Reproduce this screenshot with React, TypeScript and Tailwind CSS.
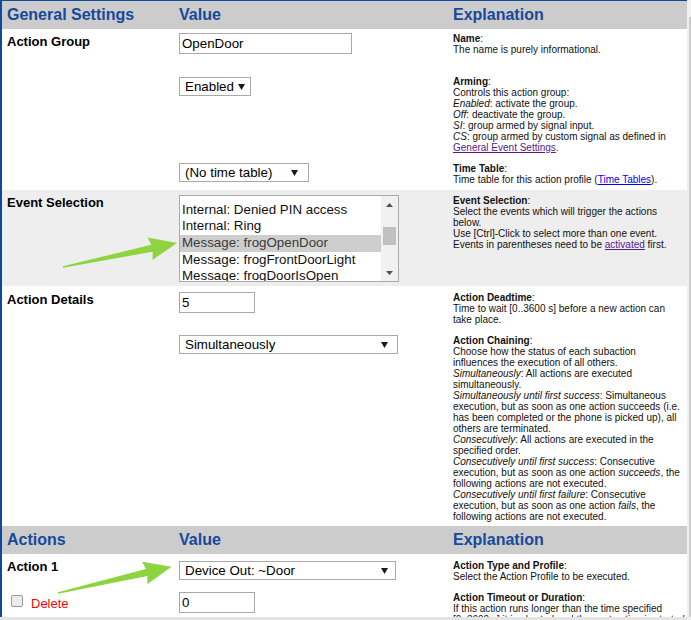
import React from "react";

const FONT = "font-['Liberation_Sans',Arial,Helvetica,sans-serif]";

function Caret() {
  return (
    <svg width="7" height="6" viewBox="0 0 7 6" className="shrink-0">
      <polygon points="0,0 7,0 3.5,6" fill="#1a1a1a" />
    </svg>
  );
}

function Header({ title }: { title: string }) {
  return (
    <div className="flex h-[28px] shrink-0 bg-[#cccccc] pt-[5px] text-[16px] font-bold leading-[18px] text-[#17499a]">
      <div className="w-[177px] shrink-0 pl-[5px]">{title}</div>
      <div className="w-[274px] shrink-0">Value</div>
      <div className="flex-1">Explanation</div>
    </div>
  );
}

function Ex({ lines }: { lines: React.ReactNode[] }) {
  return (
    <div className="text-[10px] leading-[11px] text-[#111111]">
      {lines.map((l, i) => (
        <div key={i} className="h-[11px] whitespace-nowrap">
          {l}
        </div>
      ))}
    </div>
  );
}

function Term({ b }: { b: string }) {
  return (
    <>
      <b className="font-bold">{b}</b>:
    </>
  );
}

function It({ t }: { t: string }) {
  return <i className="italic">{t}</i>;
}

const visited = "text-[#551a8b] underline";
const link = "text-[#0000ee] underline";

const events = [
  "Internal: Denied PIN access",
  "Internal: Ring",
  "Message: frogOpenDoor",
  "Message: frogFrontDoorLight",
  "Message: frogDoorIsOpen",
];

function ListBox() {
  return (
    <div className="flex h-[87px] w-[220px] border border-[#a9a9a9] bg-white text-[13.33px]">
      <div className="flex-1 overflow-hidden">
        {/* list is scrolled: the previous option sits just above the visible area */}
        <div className="pt-[5.7px]">
          {events.map((e) => {
            const sel = e === "Message: frogOpenDoor";
            return (
              <div
                key={e}
                className={
                  sel
                    ? "h-[16.67px] whitespace-nowrap bg-[#cecece] pl-[2px] leading-[15.6px] text-[#3a3a3a]"
                    : "h-[16.67px] whitespace-nowrap pl-[2px] leading-[15.6px] text-[#111111]"
                }
              >
                {e}
              </div>
            );
          })}
        </div>
      </div>
      <div className="flex w-[17px] flex-col bg-[#f1f1f1]">
        <div className="flex h-[17px] items-center justify-center">
          <svg width="7" height="4" viewBox="0 0 7 4">
            <polygon points="3.5,0 7,4 0,4" fill="#505050" />
          </svg>
        </div>
        <div className="flex-1 px-[2px] pt-[14px]">
          <div className="h-[18px] bg-[#c1c1c1]" />
        </div>
        <div className="flex h-[17px] items-center justify-center">
          <svg width="7" height="4" viewBox="0 0 7 4">
            <polygon points="0,0 7,0 3.5,4" fill="#505050" />
          </svg>
        </div>
      </div>
    </div>
  );
}

export default function App() {
  return (
    <div className={`relative flex h-[620px] w-[691px] overflow-hidden bg-white ${FONT}`}>
      <div className="flex h-[620px] w-[687px] shrink-0 flex-col">
        <div className="flex flex-1 flex-col overflow-hidden border-l-2 border-t border-[#0d4a98]">
          <Header title="General Settings" />

          {/* Action group */}
          <div className="flex h-[161px] shrink-0 pt-[4px]">
            <div className="w-[177px] shrink-0 pl-[5px] pt-[1px] text-[13px] font-bold leading-[15px] text-black">
              Action Group
            </div>
            <div className="flex flex-1 flex-col">
              <div className="flex h-[43px]">
                <div className="w-[274px] shrink-0">
                  <div className="h-[21px] w-[173px] border border-[#a9a9a9] pl-[2px] text-[13.33px] leading-[19px] text-black">
                    OpenDoor
                  </div>
                </div>
                <Ex lines={[<Term b="Name" />, "The name is purely informational."]} />
              </div>
              <div className="flex h-[87px]">
                <div className="w-[274px] shrink-0 pt-[1px]">
                  <div className="flex h-[19px] w-[72px] items-center justify-between border border-[#a9a9a9] pl-[5px] pr-[5px] text-[13.33px] text-black">
                    <span>Enabled</span>
                    <Caret />
                  </div>
                </div>
                <Ex
                  lines={[
                    <Term b="Arming" />,
                    "Controls this action group:",
                    <>
                      <It t="Enabled" />: activate the group.
                    </>,
                    <>
                      <It t="Off" />: deactivate the group.
                    </>,
                    <>
                      <It t="SI" />: group armed by signal input.
                    </>,
                    <>
                      <It t="CS" />: group armed by custom signal as defined in
                    </>,
                    <>
                      <span className={visited}>General Event Settings</span>.
                    </>,
                  ]}
                />
              </div>
              <div className="flex flex-1">
                <div className="w-[274px] shrink-0">
                  <div className="flex h-[19px] w-[130px] items-center justify-between border border-[#a9a9a9] pl-[5px] pr-[10px] text-[13.33px] text-black">
                    <span>(No time table)</span>
                    <Caret />
                  </div>
                </div>
                <Ex
                  lines={[
                    <Term b="Time Table" />,
                    <>
                      Time table for this action profile (<span className={link}>Time Tables</span>).
                    </>,
                  ]}
                />
              </div>
            </div>
          </div>

          {/* Event selection */}
          <div className="flex h-[96px] shrink-0 bg-[#eeeeee] pt-[5px]">
            <div className="w-[177px] shrink-0 pl-[5px] text-[13px] font-bold leading-[15px] text-black">
              Event Selection
            </div>
            <div className="w-[274px] shrink-0">
              <ListBox />
            </div>
            <Ex
              lines={[
                <Term b="Event Selection" />,
                "Select the events which will trigger the actions",
                "below.",
                "Use [Ctrl]-Click to select more than one event.",
                <>
                  Events in parentheses need to be <span className={visited}>activated</span> first.
                </>,
              ]}
            />
          </div>

          {/* Action details */}
          <div className="flex h-[240px] shrink-0 pt-[6px]">
            <div className="w-[177px] shrink-0 pl-[5px] text-[13px] font-bold leading-[15px] text-black">
              Action Details
            </div>
            <div className="flex flex-1 flex-col">
              <div className="flex h-[43px]">
                <div className="w-[274px] shrink-0">
                  <div className="h-[21px] w-[76px] border border-[#a9a9a9] pl-[2px] text-[13.33px] leading-[19px] text-black">
                    5
                  </div>
                </div>
                <Ex
                  lines={[
                    <Term b="Action Deadtime" />,
                    "Time to wait [0..3600 s] before a new action can",
                    "take place.",
                  ]}
                />
              </div>
              <div className="flex flex-1">
                <div className="w-[274px] shrink-0">
                  <div className="flex h-[19px] w-[219px] items-center justify-between border border-[#a9a9a9] pl-[5px] pr-[9px] text-[13.33px] text-black">
                    <span>Simultaneously</span>
                    <Caret />
                  </div>
                </div>
                <Ex
                  lines={[
                    <Term b="Action Chaining" />,
                    "Choose how the status of each subaction",
                    "influences the execution of all others.",
                    <>
                      <It t="Simultaneously" />: All actions are executed
                    </>,
                    "simultaneously.",
                    <>
                      <It t="Simultaneously until first success" />: Simultaneous
                    </>,
                    "execution, but as soon as one action succeeds (i.e.",
                    "has been completed or the phone is picked up), all",
                    "others are terminated.",
                    <>
                      <It t="Consecutively" />: All actions are executed in the
                    </>,
                    "specified order.",
                    <>
                      <It t="Consecutively until first success" />: Consecutive
                    </>,
                    <>
                      execution, but as soon as one action <It t="succeeds" />, the
                    </>,
                    "following actions are not executed.",
                    <>
                      <It t="Consecutively until first failure" />: Consecutive
                    </>,
                    <>
                      execution, but as soon as one action <It t="fails" />, the
                    </>,
                    "following actions are not executed.",
                  ]}
                />
              </div>
            </div>
          </div>

          <Header title="Actions" />

          {/* Action 1 */}
          <div className="flex flex-1 pt-[6px]">
            <div className="w-[177px] shrink-0 pl-[5px]">
              <div className="-mt-[1px] text-[13px] font-bold leading-[15px] text-black">Action 1</div>
              <div className="mt-[20px] flex items-start">
                <span className="ml-[4px] mt-[1px] h-[12px] w-[12px] rounded-[2px] border border-[#9a9a9a] bg-[#ececec]" />
                <span className="ml-[8px] mt-[2px] text-[13px] leading-[15px] text-[#ff0000]">Delete</span>
              </div>
            </div>
            <div className="flex flex-1 flex-col">
              <div className="flex h-[32px]">
                <div className="w-[274px] shrink-0 pt-[1px]">
                  <div className="flex h-[19px] w-[217px] items-center justify-between border border-[#a9a9a9] pl-[5px] pr-[7px] text-[13.33px] text-black">
                    <span>Device Out: ~Door</span>
                    <Caret />
                  </div>
                </div>
                <Ex lines={[<Term b="Action Type and Profile" />, "Select the Action Profile to be executed."]} />
              </div>
              <div className="flex flex-1">
                <div className="w-[274px] shrink-0">
                  <div className="h-[21px] w-[76px] border border-[#a9a9a9] pl-[2px] text-[13.33px] leading-[19px] text-black">
                    0
                  </div>
                </div>
                <Ex
                  lines={[
                    <Term b="Action Timeout or Duration" />,
                    "If this action runs longer than the time specified",
                    "[0..3600 s] it is aborted and the next action is started.",
                  ]}
                />
              </div>
            </div>
          </div>
        </div>
        <div className="h-[3px] shrink-0 bg-[#e4e4e4]" />
      </div>

      {/* outer frame scrollbar */}
      <div className="flex w-[4px] shrink-0 justify-end bg-[#f0f0f0] pt-[17px] pb-[3px]">
        <div className="h-full w-[2px] bg-[#cdcdcd]" />
      </div>

      {/* annotation arrows */}
      <svg className="pointer-events-none absolute left-0 top-0" width="691" height="620" viewBox="0 0 691 620">
        <g transform="translate(63 267) rotate(-11.9)">
          <polygon points="0,-0.8 91,-3.5 89,-11.5 116.5,0 89,11.5 91,3.5 0,0.8" fill="#8dd440" />
        </g>
        <g transform="translate(58 593) rotate(-13)">
          <polygon points="0,-0.8 91,-3.5 89,-11.5 116.5,0 89,11.5 91,3.5 0,0.8" fill="#8dd440" />
        </g>
      </svg>
    </div>
  );
}
